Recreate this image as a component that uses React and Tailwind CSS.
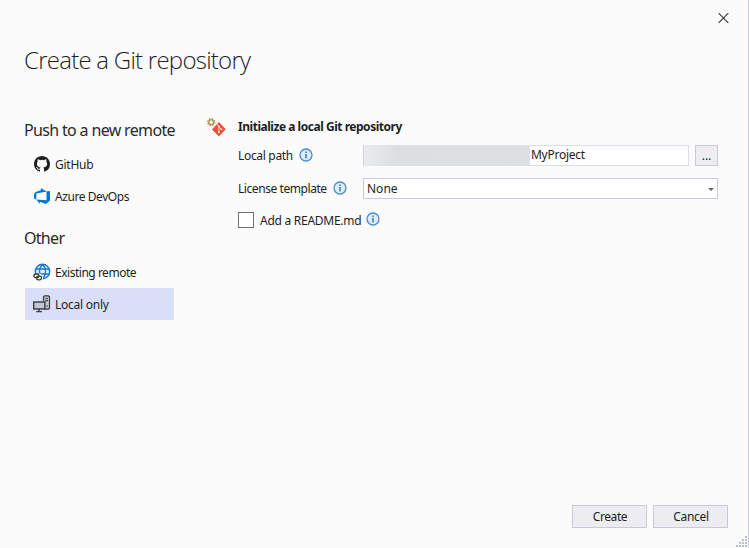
import React from "react";

function InfoIcon() {
  return (
    <svg className="-mt-[2px] block h-[14px] w-[14px] shrink-0" viewBox="0 0 14 14" fill="none">
      <circle cx="7" cy="7" r="6" fill="#deebf8" stroke="#4a8cd2" strokeWidth="1.300" />
      <path d="M7 6v4.600M7 3.400v1.500" stroke="#1260b0" strokeWidth="1.200" />
    </svg>
  );
}

function GitHubIcon() {
  return (
    <svg className="block h-4 w-4" viewBox="0 0 16 16" fill="#1e1e1e">
      <path d="M8 0C3.58 0 0 3.58 0 8c0 3.54 2.29 6.53 5.47 7.59.4.07.55-.17.55-.38 0-.19-.01-.82-.01-1.49-2.01.37-2.53-.49-2.69-.94-.09-.23-.48-.94-.82-1.13-.28-.15-.68-.52-.01-.53.63-.01 1.08.58 1.23.82.72 1.21 1.87.87 2.33.66.07-.52.28-.87.51-1.07-1.78-.2-3.64-.89-3.64-3.95 0-.87.31-1.59.82-2.15-.08-.2-.36-1.02.08-2.12 0 0 .67-.21 2.2.82a7.5 7.5 0 0 1 4 0c1.53-1.04 2.2-.82 2.2-.82.44 1.1.16 1.92.08 2.12.51.56.82 1.27.82 2.15 0 3.07-1.87 3.75-3.65 3.95.29.25.54.73.54 1.48 0 1.07-.01 1.93-.01 2.2 0 .21.15.46.55.38A8.01 8.01 0 0 0 16 8c0-4.42-3.58-8-8-8z" />
    </svg>
  );
}

function AzureDevOpsIcon() {
  return (
    <svg className="block h-4 w-4" viewBox="0 0 16 16" fill="#0078d7">
      <path d="M16 3v9.500L12 16l-6.200-2.200V16L2.300 11.500l10.200.8V3.500zM12.600 3.600 6.900 0v2.300L1.600 3.900 0 6v4.600l2.300 1V5.600z" />
    </svg>
  );
}

function GlobeIcon() {
  return (
    <svg className="block h-[18px] w-[18px]" viewBox="0 0 18 18" fill="none">
      <circle cx="9.500" cy="8.500" r="7.200" fill="#e2effb" stroke="#1c74ce" strokeWidth="1.400" />
      <path d="M9.500 1.500C5.500 5 5.500 12 9.500 15.500M9.500 1.500c4 3.500 4 10.500 0 14M3 6h13M3 11h13" stroke="#1c74ce" strokeWidth="1.300" />
      <path d="M0 10.500h7l3 2.500v4.500H0z" fill="#fbfbfb" />
      <rect x=".9" y="11" width="5" height="3.600" rx="1.800" stroke="#333" strokeWidth="1.300" />
      <rect x="3.600" y="13.200" width="5" height="3.600" rx="1.800" stroke="#333" strokeWidth="1.300" />
    </svg>
  );
}

function ComputerIcon() {
  return (
    <svg className="block h-[18px] w-[18px]" viewBox="0 0 18 18" fill="none" stroke="#3a3a40" strokeWidth="1.200">
      <path d="M10.500 6.500V1.800l1-1h4l1 1v11.400l-1 1h-4" fill="#c3c6d6" />
      <path d="M12.200 3.500h2.800M12.200 5.700h2.800M13.500 11h1.500" />
      <rect x=".7" y="7" width="11.200" height="7" fill="#c3c6d6" strokeWidth="1.400" />
      <path d="M6 14v2.500M3.300 16.600h5.600" strokeWidth="1.400" />
    </svg>
  );
}

function GitIcon() {
  return (
    <svg className="block h-[19px] w-[19px]" viewBox="0 0 19 19" fill="none">
      <circle cx="4.200" cy="4.200" r="3.500" stroke="#b09a5c" strokeWidth="1.400" strokeDasharray="1.500 1.249" />
      <circle cx="4.200" cy="4.200" r="2.400" stroke="#b09a5c" strokeWidth="1.500" />
      <path d="m11.900 4.500 6.300 6.700-6.300 6.700-6.400-6.500z" fill="#f04e37" stroke="#f04e37" strokeLinejoin="round" />
      <path d="m9.800 6 2.100 2.400v5.800M12 8.900l2.500 2.500" stroke="#fff" strokeWidth=".8" />
      <circle cx="11.900" cy="8.500" r=".8" fill="#fff" />
      <circle cx="11.900" cy="14.200" r="1" fill="#fff" />
      <circle cx="14.500" cy="11.400" r=".8" fill="#fff" />
    </svg>
  );
}

function NavItem({ icon, label, selected, tracking = "tracking-[-0.25px]" }) {
  return (
    <div className={`flex h-8 items-center pl-2 ${selected ? "bg-[#dadff8]" : ""}`}>
      <span className="flex w-[22px] shrink-0 items-center">{icon}</span>
      <span className={`whitespace-nowrap pt-px ${tracking}`}>{label}</span>
    </div>
  );
}

export default function App() {
  return (
    <div className="relative flex h-[548px] w-[749px] flex-col overflow-hidden border-r border-[#ccceda] bg-[#fbfbfb] font-['Noto_Sans','Open_Sans',sans-serif] text-[12px] leading-4 text-[#1e1e1e]">
      <header className="flex h-[36px] shrink-0 justify-end pr-[19px] pt-[13px]">
        <svg className="h-[11px] w-[11px]" viewBox="0 0 11 11" stroke="#333" strokeWidth="1.100">
          <path d="m.700.200 9.600 9.600m0-9.600-9.600 9.600" />
        </svg>
      </header>
      <h1 className="ml-6 mt-2 h-8 whitespace-nowrap font-['Open_Sans',sans-serif] text-[24px] font-light leading-8 tracking-[-0.75px]">Create a Git repository</h1>

      <main className="mt-[41px] flex">
        <nav className="ml-[25px] w-[149px]">
          <h2 className="-ml-px h-[31px] whitespace-nowrap pt-px text-[16px] leading-6 tracking-[-0.66px] text-[#2a2a2a]">Push to a new remote</h2>
          <NavItem icon={<span className="ml-px"><GitHubIcon /></span>} label="GitHub" />
          <NavItem icon={<span className="ml-px"><AzureDevOpsIcon /></span>} label="Azure DevOps" tracking="tracking-[-0.43px]" />
          <h2 className="-ml-px mt-[13px] h-[31px] pt-px text-[16px] leading-6 tracking-[-0.7px] text-[#2a2a2a]">Other</h2>
          <NavItem icon={<GlobeIcon />} label="Existing remote" tracking="tracking-[-0.48px]" />
          <NavItem icon={<ComputerIcon />} label="Local only" selected />
        </nav>

        <section className="ml-[33px] flex">
          <div className="w-[31px] pt-px"><GitIcon /></div>
          <div className="w-[480px]">
            <h3 className="h-[28px] whitespace-nowrap pt-[2px] font-bold tracking-[-0.47px]">Initialize a local Git repository</h3>
            <div className="flex h-[21px] items-center">
              <div className="flex w-[125px] items-center gap-[6px] whitespace-nowrap">
                <span className="tracking-[-0.32px]">Local path</span><InfoIcon />
              </div>
              <div className="flex h-[21px] w-[326px] items-center border border-[#dcdde8] bg-white">
                <span className="-my-px -ml-px h-[21px] w-[167px] shrink-0 border-l border-[#d4d5df] bg-linear-to-r from-[#e9eaec] via-[#dddee0] via-20% to-[#dddfe2]" />
                <span className="mb-px ml-px leading-4 tracking-[-0.27px]">MyProject</span>
              </div>
              <button className="ml-[6px] h-[21px] w-[23px] border border-[#c9c9da] bg-[#ececf1] leading-4">...</button>
            </div>
            <div className="mt-3 flex h-[21px] items-center">
              <div className="flex w-[125px] items-center gap-[6px] whitespace-nowrap">
                <span className="tracking-[-0.43px]">License template</span><InfoIcon />
              </div>
              <div className="flex h-[21px] w-[355px] items-center justify-between border border-[#c9c9dc] bg-white pl-[3px] pr-[3px]">
                <span>None</span>
                <svg className="mt-px h-[3px] w-[6px]" viewBox="0 0 6 3" fill="#666"><path d="M0 0h6L3 3z" /></svg>
              </div>
            </div>
            <div className="mt-[13px] flex h-4 items-center whitespace-nowrap">
              <span className="h-4 w-4 border border-[#717171] bg-white" />
              <span className="ml-[6px] mr-[5px] pt-px tracking-[-0.27px]">Add a README.md</span><InfoIcon />
            </div>
          </div>
        </section>
      </main>

      <footer className="mb-5 mr-5 mt-auto flex justify-end gap-[6px]">
        <button className="h-[23px] w-[75px] border border-[#c9c9da] bg-[#ececf1] pl-px tracking-[-0.4px]">Create</button>
        <button className="h-[23px] w-[75px] border border-[#c9c9da] bg-[#ececf1] pl-px tracking-[-0.3px]">Cancel</button>
      </footer>
      <svg className="absolute bottom-0 right-0 h-3 w-3" viewBox="0 0 12 12" fill="#b9bfd7">
        <path d="M9 0h2v2H9zM6 3h2v2H6zM9 3h2v2H9zM3 6h2v2H3zM6 6h2v2H6zM9 6h2v2H9zM0 9h2v2H0zM3 9h2v2H3zM6 9h2v2H6zM9 9h2v2H9z" />
      </svg>
    </div>
  );
}
